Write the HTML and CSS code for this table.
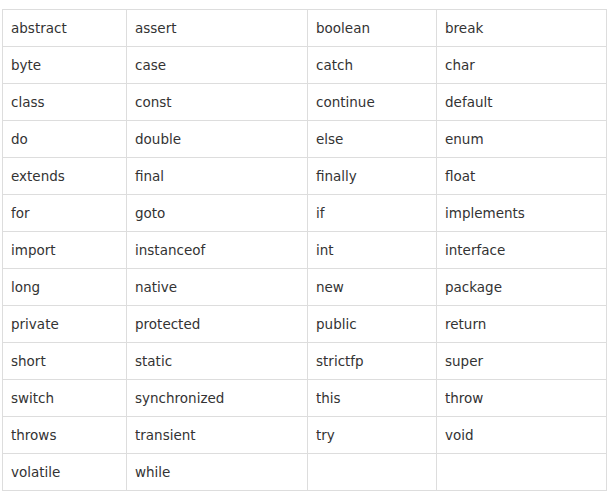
FILE: index.html
```html
<!DOCTYPE html>
<html>
<head>
<meta charset="utf-8">
<link rel="stylesheet" href="styles.css">
</head>
<body>
<table class="kw">
<colgroup><col class="c1"><col class="c2"><col class="c3"><col class="c4"></colgroup>
<tbody>
<tr><td>abstract</td><td>assert</td><td>boolean</td><td>break</td></tr>
<tr><td>byte</td><td>case</td><td>catch</td><td>char</td></tr>
<tr><td>class</td><td>const</td><td>continue</td><td>default</td></tr>
<tr><td>do</td><td>double</td><td>else</td><td>enum</td></tr>
<tr><td>extends</td><td>final</td><td>finally</td><td>float</td></tr>
<tr><td>for</td><td>goto</td><td>if</td><td>implements</td></tr>
<tr><td>import</td><td>instanceof</td><td>int</td><td>interface</td></tr>
<tr><td>long</td><td>native</td><td>new</td><td>package</td></tr>
<tr><td>private</td><td>protected</td><td>public</td><td>return</td></tr>
<tr><td>short</td><td>static</td><td>strictfp</td><td>super</td></tr>
<tr><td>switch</td><td>synchronized</td><td>this</td><td>throw</td></tr>
<tr><td>throws</td><td>transient</td><td>try</td><td>void</td></tr>
<tr><td>volatile</td><td>while</td><td></td><td></td></tr>
</tbody>
</table>
</body>
</html>
```
FILE: styles.css
```css
html, body {
  margin: 0;
  padding: 0;
  background: #fff;
}
body {
  font-family: "DejaVu Sans", Verdana, sans-serif;
  font-size: 13.5px;
  color: #333;
}
.kw {
  border-collapse: collapse;
  table-layout: fixed;
  width: 604px;
  margin: 9px 0 0 2px;
}
.c1 { width: 124px; }
.c2 { width: 181px; }
.c3 { width: 129px; }
.c4 { width: 170px; }
.kw td {
  border: 1px solid #ddd;
  padding: 1px 8px 0;
  height: 35px;
  line-height: 35px;
  white-space: nowrap;
  vertical-align: middle;
}
```
